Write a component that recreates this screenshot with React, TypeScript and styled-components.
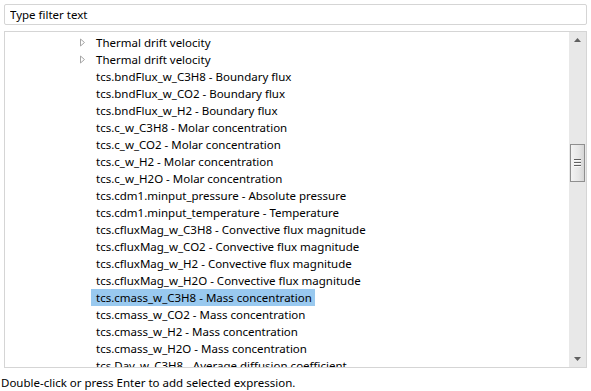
import React, { useState } from "react";
import styled, { createGlobalStyle } from "styled-components";

const GlobalStyle = createGlobalStyle`
  html, body {
    margin: 0;
    padding: 0;
    background: #fff;
  }
  body {
    font-family: "Noto Sans", "Open Sans", sans-serif;
    font-size: 11.5px;
    color: #000;
  }
`;

const items: { label: string; expandable?: boolean }[] = [
  { label: "Thermal drift velocity", expandable: true },
  { label: "Thermal drift velocity", expandable: true },
  { label: "tcs.bndFlux_w_C3H8 - Boundary flux" },
  { label: "tcs.bndFlux_w_CO2 - Boundary flux" },
  { label: "tcs.bndFlux_w_H2 - Boundary flux" },
  { label: "tcs.c_w_C3H8 - Molar concentration" },
  { label: "tcs.c_w_CO2 - Molar concentration" },
  { label: "tcs.c_w_H2 - Molar concentration" },
  { label: "tcs.c_w_H2O - Molar concentration" },
  { label: "tcs.cdm1.minput_pressure - Absolute pressure" },
  { label: "tcs.cdm1.minput_temperature - Temperature" },
  { label: "tcs.cfluxMag_w_C3H8 - Convective flux magnitude" },
  { label: "tcs.cfluxMag_w_CO2 - Convective flux magnitude" },
  { label: "tcs.cfluxMag_w_H2 - Convective flux magnitude" },
  { label: "tcs.cfluxMag_w_H2O - Convective flux magnitude" },
  { label: "tcs.cmass_w_C3H8 - Mass concentration" },
  { label: "tcs.cmass_w_CO2 - Mass concentration" },
  { label: "tcs.cmass_w_H2 - Mass concentration" },
  { label: "tcs.cmass_w_H2O - Mass concentration" },
  { label: "tcs.Dav_w_C3H8 - Average diffusion coefficient" },
  { label: "tcs.Dav_w_CO2 - Average diffusion coefficient" },
];

export default function App() {
  const [filter, setFilter] = useState("");
  const [selected, setSelected] = useState(15);

  return (
    <Page>
      <GlobalStyle />
      <FilterInput
        placeholder="Type filter text"
        value={filter}
        onChange={(e) => setFilter(e.currentTarget.value)}
      />
      <ListBox>
        <Rows>
          {items.map((item, i) => (
            <Row key={i} onClick={() => setSelected(i)}>
              <Twisty>
                {item.expandable && (
                  <svg width="7" height="9" viewBox="0 0 7 9">
                    <path d="M1.5 1 L5.5 4.5 L1.5 8 Z" fill="#fff" stroke="#a6a6a6" strokeWidth="1" />
                  </svg>
                )}
              </Twisty>
              <Label $selected={i === selected}>{item.label}</Label>
            </Row>
          ))}
        </Rows>
        <ScrollBar>
          <ArrowButton>
            <svg width="7" height="4" viewBox="0 0 7 4">
              <path d="M0 4 L3.5 0 L7 4 Z" fill="#606060" />
            </svg>
          </ArrowButton>
          <Track>
            <Thumb>
              <Grip />
              <Grip />
              <Grip />
            </Thumb>
          </Track>
          <ArrowButton>
            <svg width="7" height="4" viewBox="0 0 7 4">
              <path d="M0 0 L7 0 L3.5 4 Z" fill="#606060" />
            </svg>
          </ArrowButton>
        </ScrollBar>
      </ListBox>
      <Hint>Double-click or press Enter to add selected expression.</Hint>
    </Page>
  );
}

const Page = styled.div`
  width: 591px;
  height: 391px;
  box-sizing: border-box;
  padding: 4px 4px 0 4px;
  display: flex;
  flex-direction: column;
  overflow: hidden;
`;

const FilterInput = styled.input`
  height: 21px;
  box-sizing: border-box;
  border: 1px solid #d5d5d5;
  border-radius: 2px;
  padding: 0 5px;
  font: inherit;
  outline: none;
  &::placeholder {
    color: #000;
  }
`;

const ListBox = styled.div`
  margin-top: 6px;
  height: 340px;
  box-sizing: border-box;
  border: 1px solid #d5d5d5;
  display: flex;
  overflow: hidden;
`;

const Rows = styled.div`
  flex: 1;
  padding-top: 2px;
  overflow: hidden;
`;

const Row = styled.div`
  height: 17px;
  display: flex;
  align-items: center;
  padding-left: 72px;
  white-space: nowrap;
  cursor: default;
`;

const Twisty = styled.span`
  width: 10px;
  display: flex;
  align-items: center;
  justify-content: center;
`;

const Label = styled.span<{ $selected: boolean }>`
  line-height: 17px;
  margin-left: 4px;
  padding: 0 3px 0 5px;
  background: ${(p) => (p.$selected ? "#99c9ef" : "transparent")};
`;

const ScrollBar = styled.div`
  width: 17px;
  background: #e8e8e8;
  display: flex;
  flex-direction: column;
`;

const ArrowButton = styled.div`
  height: 17px;
  display: flex;
  align-items: center;
  justify-content: center;
`;

const Track = styled.div`
  flex: 1;
  position: relative;
`;

const Thumb = styled.div`
  position: absolute;
  top: 95px;
  left: 1px;
  width: 13px;
  height: 36px;
  border: 1px solid #8f8f8f;
  background: linear-gradient(to right, #f3f3f3, #e6e6e6 60%, #d6d6d6);
  display: flex;
  flex-direction: column;
  align-items: center;
  justify-content: center;
  gap: 2px;
`;

const Grip = styled.div`
  width: 7px;
  height: 1px;
  background: #606060;
  box-shadow: 0 1px 0 #fafafa;
`;

const Hint = styled.div`
  margin-top: 6px;
  margin-left: -3px;
  line-height: 17px;
`;
